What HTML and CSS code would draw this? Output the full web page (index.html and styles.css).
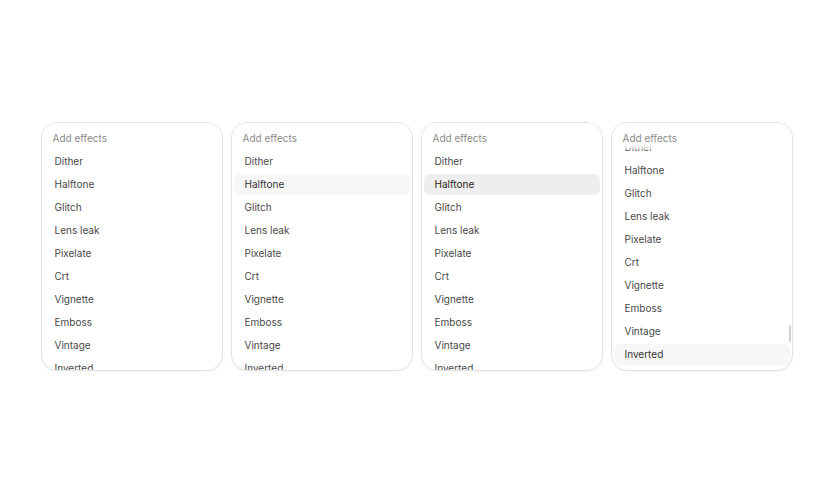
FILE: index.html
```html
<!DOCTYPE html>
<html>
<head>
<meta charset="utf-8">
<link rel="stylesheet" href="styles.css">
</head>
<body>
<div class="stage">
  <div class="card">
    <div class="head">Add effects</div>
    <div class="view">
      <ul class="list">
        <li class="item">Dither</li>
        <li class="item">Halftone</li>
        <li class="item">Glitch</li>
        <li class="item">Lens leak</li>
        <li class="item">Pixelate</li>
        <li class="item">Crt</li>
        <li class="item">Vignette</li>
        <li class="item">Emboss</li>
        <li class="item">Vintage</li>
        <li class="item">Inverted</li>
      </ul>
    </div>
  </div>
  <div class="card">
    <div class="head">Add effects</div>
    <div class="view">
      <ul class="list">
        <li class="item">Dither</li>
        <li class="item hover">Halftone</li>
        <li class="item">Glitch</li>
        <li class="item">Lens leak</li>
        <li class="item">Pixelate</li>
        <li class="item">Crt</li>
        <li class="item">Vignette</li>
        <li class="item">Emboss</li>
        <li class="item">Vintage</li>
        <li class="item">Inverted</li>
      </ul>
    </div>
  </div>
  <div class="card">
    <div class="head">Add effects</div>
    <div class="view">
      <ul class="list">
        <li class="item">Dither</li>
        <li class="item active">Halftone</li>
        <li class="item">Glitch</li>
        <li class="item">Lens leak</li>
        <li class="item">Pixelate</li>
        <li class="item">Crt</li>
        <li class="item">Vignette</li>
        <li class="item">Emboss</li>
        <li class="item">Vintage</li>
        <li class="item">Inverted</li>
      </ul>
    </div>
  </div>
  <div class="card">
    <div class="head">Add effects</div>
    <div class="view">
      <ul class="list scrolled">
        <li class="item">Dither</li>
        <li class="item">Halftone</li>
        <li class="item">Glitch</li>
        <li class="item">Lens leak</li>
        <li class="item">Pixelate</li>
        <li class="item">Crt</li>
        <li class="item">Vignette</li>
        <li class="item">Emboss</li>
        <li class="item">Vintage</li>
        <li class="item hover">Inverted</li>
      </ul>
    </div>
    <div class="thumb"></div>
  </div>
</div>
</body>
</html>
```

FILE: styles.css
```css
* { box-sizing: border-box; }
html, body { margin: 0; padding: 0; background: #fff; }
body {
  font-family: Inter, "Liberation Sans", sans-serif;
  width: 833px;
  height: 492px;
}
.stage {
  height: 492px;
  display: flex;
  align-items: center;
  justify-content: center;
  gap: 8px;
}
.card {
  position: relative;
  width: 182px;
  height: 249px;
  border: 1px solid #e2e2e2;
  border-radius: 16px;
  background: #fff;
  box-shadow: 0 1px 2px rgba(0,0,0,0.04);
  overflow: hidden;
}
.head {
  position: absolute;
  left: 0;
  right: 0;
  top: 0;
  height: 28px;
  padding: 3px 0 0 11px;
  line-height: 24px;
  font-size: 10px;
  color: #8a8a8a;
  background: linear-gradient(#fff 0, #fff 21px, rgba(255,255,255,0.85) 24px, rgba(255,255,255,0) 28px);
  z-index: 2;
}
.view {
  height: 100%;
  overflow: hidden;
  padding: 28px 2px 4px 2px;
}
.list {
  list-style: none;
  margin: 0;
  padding: 0;
  display: flex;
  flex-direction: column;
  gap: 2px;
}
.list.scrolled { margin-top: -14px; }
.item {
  height: 21px;
  line-height: 21px;
  padding-left: 11px;
  border-radius: 6px;
  font-size: 10px;
  color: #484848;
}
.item.hover { background: #f7f7f7; color: #333; }
.item.active { background: #eeeeee; color: #1f1f1f; }
.thumb {
  position: absolute;
  right: 1px;
  top: 202px;
  width: 2px;
  height: 17px;
  border-radius: 1px;
  background: #cfcfcf;
  z-index: 3;
}
```
